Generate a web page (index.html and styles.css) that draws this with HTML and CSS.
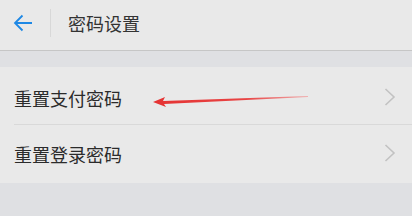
FILE: index.html
```html
<!DOCTYPE html>
<html lang="zh-CN">
<head>
  <meta charset="UTF-8">
  <title>密码设置</title>
  <link rel="stylesheet" href="styles.css">
</head>
<body>

  <div class="header">
    <div class="back">
      <svg width="20" height="18" viewBox="0 0 20 18">
        <path d="M9.5 1.5 L2 9 L9.5 16.5 M2 9 H19" fill="none" stroke="#1e88e5" stroke-width="1.8"/>
      </svg>
    </div>
    <div class="divider"></div>
    <div class="title">密码设置</div>
  </div>

  <div class="gap"></div>

  <div class="list">
    <div class="row">
      <span class="label">重置支付密码</span>
      <svg class="chevron" width="12" height="18" viewBox="0 0 12 18">
        <path d="M1.5 1 L10 9 L1.5 17" fill="none" stroke="#c2c2c2" stroke-width="1.6"/>
      </svg>
      <svg class="mark" width="160" height="14" viewBox="0 0 160 14">
        <defs>
          <linearGradient id="fade" x1="0" x2="1" y1="0" y2="0">
            <stop offset="0" stop-color="#e53333"/>
            <stop offset="0.6" stop-color="#e84444"/>
            <stop offset="1" stop-color="#f0b0b0"/>
          </linearGradient>
        </defs>
        <polygon points="0,8 12,3 10,7 155,2 155,3 11,10 13,13" fill="url(#fade)"/>
      </svg>
    </div>
    <div class="row">
      <span class="label">重置登录密码</span>
      <svg class="chevron" width="12" height="18" viewBox="0 0 12 18">
        <path d="M1.5 1 L10 9 L1.5 17" fill="none" stroke="#c2c2c2" stroke-width="1.6"/>
      </svg>
    </div>
  </div>

</body>
</html>
```

FILE: styles.css
```css
body {
  margin: 0;
  font-family: "Noto Sans CJK SC", "Noto Sans", sans-serif;
  background: #dfe0e3;
  width: 412px;
  height: 216px;
  overflow: hidden;
}
.header {
  height: 50px;
  background: #e9e9e9;
  border-bottom: 1px solid #c6c6c6;
  display: flex;
  align-items: center;
}
.back {
  width: 50px;
  padding-left: 13px;
  box-sizing: border-box;
  display: flex;
  align-items: center;
  margin-top: -4px;
}
.divider {
  width: 1px;
  height: 28px;
  background: #d8d8d8;
  margin-top: -4px;
}
.title {
  margin-left: 17px;
  font-size: 18px;
  color: #333;
  margin-top: -5px;
}
.gap {
  height: 16px;
}
.list {
  background: #e9e9e9;
}
.row {
  position: relative;
  height: 57px;
  margin-left: 14px;
  padding-right: 16px;
  display: flex;
  align-items: center;
  justify-content: space-between;
  border-bottom: 1px solid #d9d9d9;
}
.row:last-child {
  height: 58px;
  border-bottom: none;
}
.label {
  font-size: 18px;
  color: #2b2b2b;
  margin-top: 4px;
}
.row:last-child .label {
  margin-top: 0;
}
.chevron {
  margin-top: 2px;
}
.row:last-child .chevron {
  margin-top: -2px;
}
.mark {
  position: absolute;
  left: 139px;
  top: 27px;
}
```
